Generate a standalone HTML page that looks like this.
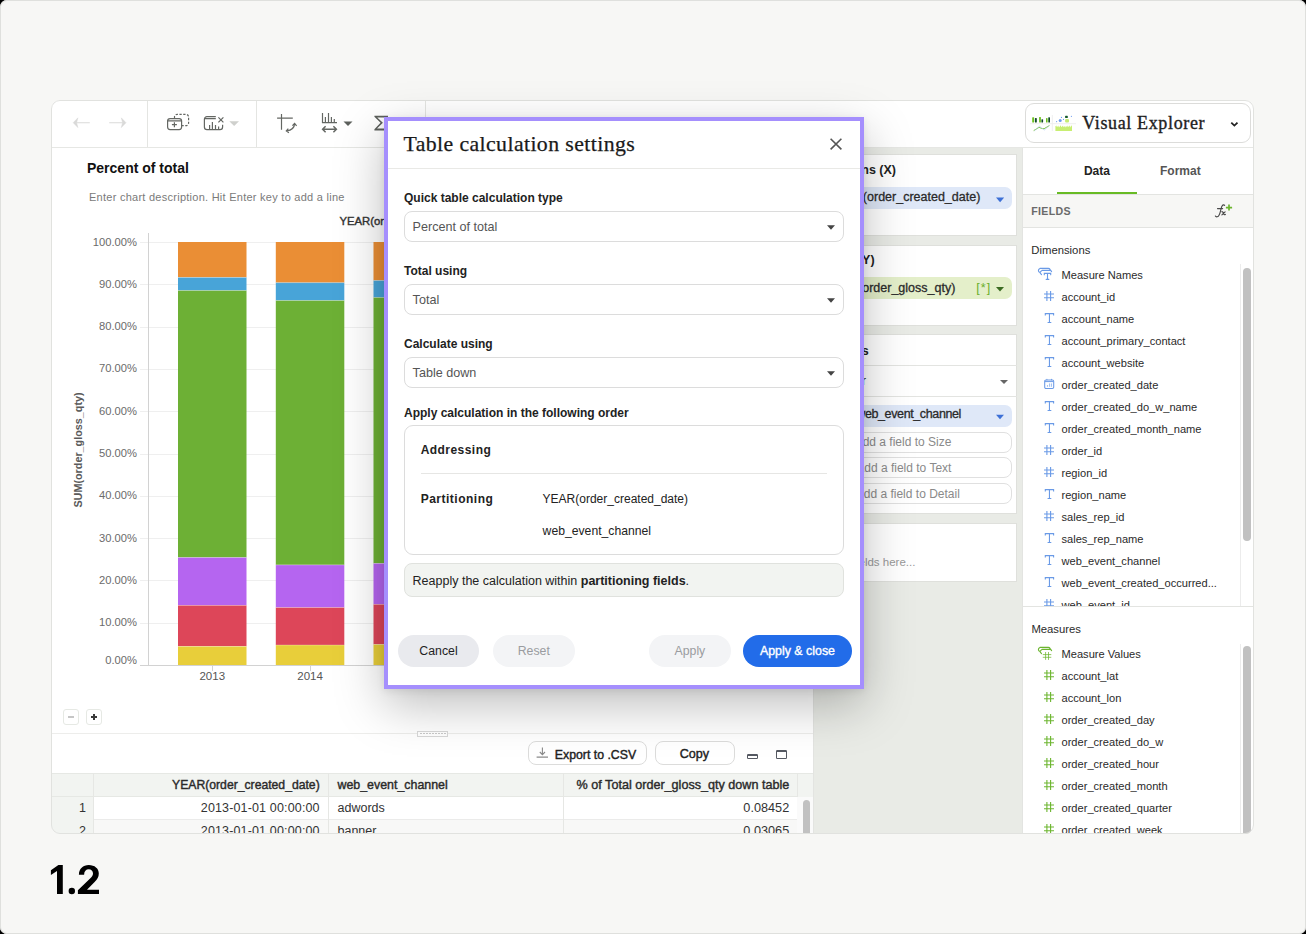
<!DOCTYPE html>
<html><head><meta charset="utf-8">
<style>
*{box-sizing:border-box;margin:0;padding:0}
html,body{width:1306px;height:934px;overflow:hidden;background:#000}
body{font-family:"Liberation Sans",sans-serif;color:#222;position:relative}
.a{position:absolute}
.t{position:absolute;white-space:nowrap;line-height:1}
.frame{position:absolute;left:0;top:0;width:1306px;height:934px;border-radius:7px;background:#f7f7f5;box-shadow:inset 0 0 0 1px #dfe0dd;overflow:hidden}
.card{position:absolute;left:51px;top:100px;width:1203px;height:734px;background:#fff;border-radius:9px;overflow:hidden}
.vl{position:absolute;width:1px;background:#e4e5e2}
.hl{position:absolute;height:1px;background:#e4e5e2}
</style></head>
<body>
<div class="frame">
  <div class="card"><div class="a" style="left:-51px;top:-100px;width:1306px;height:934px">
    <!-- toolbar -->
    <div class="hl" style="left:51px;top:147px;width:1203px;background:#e6e7e4"></div>
    <div class="vl" style="left:147px;top:100px;height:47px"></div>
    <div class="vl" style="left:256px;top:100px;height:47px"></div>
    <div class="vl" style="left:425px;top:100px;height:47px"></div>
    <svg class="a" style="left:0;top:0" width="460" height="150" viewBox="0 0 460 150">
      <g fill="#d9d9d8" stroke="#d9d9d8" stroke-width="0.5" stroke-linejoin="round">
        <path d="M77.9 117.8L73.2 122.7L77.9 127.6L76.6 122.7Z"/>
        <path d="M121.3 117.8L126 122.7L121.3 127.6L122.6 122.7Z"/>
      </g>
      <path d="M75 122.7H89.8M109.2 122.7H124" stroke="#dadad9" stroke-width="1.1"/>
      <g fill="none" stroke="#646763" stroke-width="1.2">
        <rect x="167.6" y="118.6" width="14" height="11" rx="2.5"/>
        <path d="M168 120.9H181.2"/>
        <path d="M174.4 122.2V127.2M171.9 124.7H176.9"/>
        <path d="M174.5 118.3V117a2.6 2.6 0 0 1 2.6-2.6H186a2.6 2.6 0 0 1 2.6 2.6V123a2.6 2.6 0 0 1-2.6 2.6H182" stroke-dasharray="2.3 1.5"/>
        <path d="M215.8 116.6H207a2.6 2.6 0 0 0-2.6 2.6V127a2.6 2.6 0 0 0 2.6 2.6H220a2.6 2.6 0 0 0 2.6-2.6V124.8"/>
        <path d="M204.6 118.7H215.8"/>
        <path d="M209.6 125V129.5M212.4 122V129.5M215.5 125V129.5M218.6 126.5V129.5"/>
        <path d="M218.4 117.4L223.4 122.4M223.4 117.4L218.4 122.4"/>
        <path d="M281.5 114V129.7M277.1 118.1H292.8"/>
        <path d="M286.6 130.9Q294.3 129.9 294.6 123.6M288.3 128.6L286.3 130.9L288.9 132.7M292.4 125.6L294.6 123.3L296.6 125.9"/>
        <path d="M322.5 113.1V122.6H337M325.4 117.1V122.6M328.5 113.1V122.6M331.4 117.1V122.6M334.3 119V122.6"/>
        <path d="M323 129.2H336M325.6 126.2L322.6 129.2L325.6 132.2M333.4 126.2L336.4 129.2L333.4 132.2" stroke-width="1.5"/>
      </g>
      <path d="M229.3 121.3H239L234.15 125.9Z" fill="#cfd0cd"/>
      <path d="M343.5 121.6H352.5L348 125.9Z" fill="#5d605c"/>
      <path d="M374.4 115.8H388V117.4H377.2L382.9 122.8L377 128.4H388V130.4H374.4V129.3L380.6 122.8L374.4 116.8Z" fill="#5d605c"/>
    </svg>

    <!-- chart title -->
    <div class="t" style="left:87px;top:161.4px;font-size:14px;font-weight:bold;color:#111">Percent of total</div>
    <div class="t" style="left:89px;top:192.2px;font-size:11px;letter-spacing:0.26px;color:#7a7a7a">Enter chart description. Hit Enter key to add a line</div>
    <div class="t" style="left:339.5px;top:215.6px;font-size:11.3px;color:#333;-webkit-text-stroke:0.4px #333">YEAR(order_created_date)</div>

    <!-- y-axis -->
    <div class="a" style="left:77.6px;top:450px;width:0;height:0">
      <div class="t" style="left:0;top:0;transform:translate(-50%,-50%) rotate(-90deg);font-size:10.8px;font-weight:bold;color:#5a5a5a">SUM(order_gloss_qty)</div>
    </div>
    <div class="a" style="left:140px;top:242px;width:260.00px;height:1.00px;background:#efefef;"></div>
<div class="t" style="top:236.52px;font-size:11.2px;color:#6b6b6b;right:1169.00px;">100.00%</div>
<div class="a" style="left:140px;top:284px;width:260.00px;height:1.00px;background:#efefef;"></div>
<div class="t" style="top:278.82px;font-size:11.2px;color:#6b6b6b;right:1169.00px;">90.00%</div>
<div class="a" style="left:140px;top:327px;width:260.00px;height:1.00px;background:#efefef;"></div>
<div class="t" style="top:321.12px;font-size:11.2px;color:#6b6b6b;right:1169.00px;">80.00%</div>
<div class="a" style="left:140px;top:369px;width:260.00px;height:1.00px;background:#efefef;"></div>
<div class="t" style="top:363.42px;font-size:11.2px;color:#6b6b6b;right:1169.00px;">70.00%</div>
<div class="a" style="left:140px;top:411px;width:260.00px;height:1.00px;background:#efefef;"></div>
<div class="t" style="top:405.72px;font-size:11.2px;color:#6b6b6b;right:1169.00px;">60.00%</div>
<div class="a" style="left:140px;top:454px;width:260.00px;height:1.00px;background:#efefef;"></div>
<div class="t" style="top:448.02px;font-size:11.2px;color:#6b6b6b;right:1169.00px;">50.00%</div>
<div class="a" style="left:140px;top:496px;width:260.00px;height:1.00px;background:#efefef;"></div>
<div class="t" style="top:490.32px;font-size:11.2px;color:#6b6b6b;right:1169.00px;">40.00%</div>
<div class="a" style="left:140px;top:538px;width:260.00px;height:1.00px;background:#efefef;"></div>
<div class="t" style="top:532.62px;font-size:11.2px;color:#6b6b6b;right:1169.00px;">30.00%</div>
<div class="a" style="left:140px;top:580px;width:260.00px;height:1.00px;background:#efefef;"></div>
<div class="t" style="top:574.92px;font-size:11.2px;color:#6b6b6b;right:1169.00px;">20.00%</div>
<div class="a" style="left:140px;top:623px;width:260.00px;height:1.00px;background:#efefef;"></div>
<div class="t" style="top:617.22px;font-size:11.2px;color:#6b6b6b;right:1169.00px;">10.00%</div>
<div class="t" style="top:654.82px;font-size:11.2px;color:#6b6b6b;right:1169.00px;">0.00%</div>
<div class="a" style="left:140px;top:665px;width:260.00px;height:1.00px;background:#d2d2d2;"></div>
<div class="a" style="left:148px;top:233px;width:1.00px;height:433.00px;background:#d2d2d2;"></div>
<svg class="a" style="left:0;top:0" width="460" height="700"><rect x="178.0" y="242" width="68.5" height="35.40" fill="#ea8e35"/><rect x="178.0" y="277.4" width="68.5" height="13.10" fill="#48a4d8"/><rect x="178.0" y="290.5" width="68.5" height="267.00" fill="#6db035"/><rect x="178.0" y="557.5" width="68.5" height="47.80" fill="#b565f0"/><rect x="178.0" y="605.3" width="68.5" height="41.00" fill="#dd4659"/><rect x="178.0" y="646.3" width="68.5" height="18.70" fill="#e8ce3a"/><rect x="178.0" y="277.10" width="68.5" height="0.7" fill="rgba(255,255,255,.38)"/><rect x="178.0" y="290.20" width="68.5" height="0.7" fill="rgba(255,255,255,.38)"/><rect x="178.0" y="557.20" width="68.5" height="0.7" fill="rgba(255,255,255,.38)"/><rect x="178.0" y="605.00" width="68.5" height="0.7" fill="rgba(255,255,255,.38)"/><rect x="178.0" y="646.00" width="68.5" height="0.7" fill="rgba(255,255,255,.38)"/><rect x="275.8" y="242" width="68.5" height="40.70" fill="#ea8e35"/><rect x="275.8" y="282.7" width="68.5" height="17.80" fill="#48a4d8"/><rect x="275.8" y="300.5" width="68.5" height="264.40" fill="#6db035"/><rect x="275.8" y="564.9" width="68.5" height="42.60" fill="#b565f0"/><rect x="275.8" y="607.5" width="68.5" height="37.50" fill="#dd4659"/><rect x="275.8" y="645.0" width="68.5" height="20.00" fill="#e8ce3a"/><rect x="275.8" y="282.40" width="68.5" height="0.7" fill="rgba(255,255,255,.38)"/><rect x="275.8" y="300.20" width="68.5" height="0.7" fill="rgba(255,255,255,.38)"/><rect x="275.8" y="564.60" width="68.5" height="0.7" fill="rgba(255,255,255,.38)"/><rect x="275.8" y="607.20" width="68.5" height="0.7" fill="rgba(255,255,255,.38)"/><rect x="275.8" y="644.70" width="68.5" height="0.7" fill="rgba(255,255,255,.38)"/><rect x="373.5" y="242" width="68.5" height="38.50" fill="#ea8e35"/><rect x="373.5" y="280.5" width="68.5" height="17.00" fill="#48a4d8"/><rect x="373.5" y="297.5" width="68.5" height="265.90" fill="#6db035"/><rect x="373.5" y="563.4" width="68.5" height="40.90" fill="#b565f0"/><rect x="373.5" y="604.3" width="68.5" height="40.10" fill="#dd4659"/><rect x="373.5" y="644.4" width="68.5" height="20.60" fill="#e8ce3a"/><rect x="373.5" y="280.20" width="68.5" height="0.7" fill="rgba(255,255,255,.38)"/><rect x="373.5" y="297.20" width="68.5" height="0.7" fill="rgba(255,255,255,.38)"/><rect x="373.5" y="563.10" width="68.5" height="0.7" fill="rgba(255,255,255,.38)"/><rect x="373.5" y="604.00" width="68.5" height="0.7" fill="rgba(255,255,255,.38)"/><rect x="373.5" y="644.10" width="68.5" height="0.7" fill="rgba(255,255,255,.38)"/></svg>
<div class="a" style="left:211.75px;top:665px;width:1.00px;height:6.00px;background:#d2d2d2;"></div>
<div class="t" style="top:671.27px;font-size:11.5px;color:#555;left:212.25px;transform:translateX(-50%);">2013</div>
<div class="a" style="left:309.55px;top:665px;width:1.00px;height:6.00px;background:#d2d2d2;"></div>
<div class="t" style="top:671.27px;font-size:11.5px;color:#555;left:310.05px;transform:translateX(-50%);">2014</div>
<div class="a" style="left:407.25px;top:665px;width:1.00px;height:6.00px;background:#d2d2d2;"></div>
<div class="t" style="top:671.27px;font-size:11.5px;color:#555;left:407.75px;transform:translateX(-50%);">2015</div>

<div class="a" style="left:63.3px;top:709.3px;width:15.4px;height:15.4px;border:1px solid #e6e9e4;border-radius:3px"></div>
<div class="a" style="left:68.1px;top:716.2px;width:5.80px;height:1.60px;background:#c6c6c6;"></div>
<div class="a" style="left:86.2px;top:709.3px;width:15.4px;height:15.4px;border:1px solid #e6e9e4;border-radius:3px"></div>
<div class="a" style="left:91px;top:716.1px;width:6.00px;height:1.80px;background:#3a3a3a;"></div>
<div class="a" style="left:93.1px;top:713.9px;width:1.80px;height:6.00px;background:#3a3a3a;"></div>
<div class="a" style="left:51px;top:733px;width:762.00px;height:1.00px;background:#ededeb;"></div>
<div class="a" style="left:417px;top:730.5px;width:31px;height:6px;border:1px solid #d8d8d8;background:#fff"></div>
<div class="a" style="left:419.5px;top:733px;width:26px;height:1px;background:repeating-linear-gradient(90deg,#c9c9c9 0 2px,transparent 2px 3px)"></div>
<div class="a" style="left:528px;top:741px;width:119px;height:24px;border:1px solid #dcdcdb;border-radius:8px;background:#fff"></div>
<svg class="a" style="left:530px;top:742px" width="24" height="20"><path d="M12.4 5.5V12.5M9.8 10L12.4 12.6L15 10M6.6 15.1H18" fill="none" stroke="#8a8a8a" stroke-width="1.1"/></svg>
<div class="t" style="top:748.59px;font-size:12.3px;color:#222;left:554.80px;-webkit-text-stroke:0.4px #222;">Export to .CSV</div>
<div class="a" style="left:655px;top:741px;width:80px;height:24px;border:1px solid #dcdcdb;border-radius:8px;background:#fff"></div>
<div class="t" style="top:748.33px;font-size:12.6px;color:#222;left:679.70px;-webkit-text-stroke:0.4px #222;">Copy</div>
<div class="a" style="left:747px;top:753.5px;width:11px;height:5.5px;border:1.3px solid #555962;border-top-width:2px;border-radius:1.2px"></div>
<div class="a" style="left:776px;top:749.8px;width:11px;height:9.5px;border:1.3px solid #555962;border-top-width:2.6px;border-radius:1.2px"></div>
<div class="a" style="left:51px;top:773px;width:762.00px;height:23.50px;background:#f2f4f1;"></div>
<div class="a" style="left:51px;top:772.5px;width:762.00px;height:1.00px;background:#e6e8e4;"></div>
<div class="a" style="left:51px;top:796px;width:746.00px;height:1.00px;background:#e6e8e4;"></div>
<div class="a" style="left:51px;top:796.5px;width:42.50px;height:37.50px;background:#f2f4f1;"></div>
<div class="a" style="left:93.5px;top:819px;width:703.50px;height:1.00px;background:#ebebea;"></div>
<div class="a" style="left:93.5px;top:820px;width:703.50px;height:14.00px;background:#f8f8f7;"></div>
<div class="a" style="left:93px;top:773px;width:1.00px;height:61.00px;background:#e6e7e4;"></div>
<div class="a" style="left:328px;top:773px;width:1.00px;height:61.00px;background:#e6e7e4;"></div>
<div class="a" style="left:563px;top:773px;width:1.00px;height:61.00px;background:#e6e7e4;"></div>
<div class="a" style="left:797px;top:773px;width:1.00px;height:61.00px;background:#e6e7e4;"></div>
<div class="t" style="top:779.37px;font-size:12.2px;color:#2a2a2a;right:986.30px;-webkit-text-stroke:0.4px #2a2a2a;">YEAR(order_created_date)</div>
<div class="t" style="top:779.20px;font-size:12.4px;color:#2a2a2a;left:337.50px;-webkit-text-stroke:0.4px #2a2a2a;">web_event_channel</div>
<div class="t" style="top:779.03px;font-size:12.6px;color:#2a2a2a;right:516.80px;-webkit-text-stroke:0.4px #2a2a2a;">% of Total order_gloss_qty down table</div>
<div class="t" style="top:802.12px;font-size:12.5px;color:#333;right:1220.00px;">1</div>
<div class="t" style="top:802.12px;font-size:12.5px;color:#333;letter-spacing:0.15px;right:986.30px;">2013-01-01 00:00:00</div>
<div class="t" style="top:802.12px;font-size:12.5px;color:#333;left:337.50px;">adwords</div>
<div class="t" style="top:801.95px;font-size:12.7px;color:#333;right:516.80px;">0.08452</div>
<div class="t" style="top:825.12px;font-size:12.5px;color:#333;right:1220.00px;">2</div>
<div class="t" style="top:825.12px;font-size:12.5px;color:#333;letter-spacing:0.15px;right:986.30px;">2013-01-01 00:00:00</div>
<div class="t" style="top:825.12px;font-size:12.5px;color:#333;left:337.50px;">banner</div>
<div class="t" style="top:824.95px;font-size:12.7px;color:#333;right:516.80px;">0.03065</div>
<div class="a" style="left:797px;top:796.5px;width:16.00px;height:37.50px;background:#fafafa;"></div>
<div class="a" style="left:802.5px;top:800px;width:7.5px;height:40px;border-radius:4px;background:#c1c1c1"></div>
<div class="a" style="left:812.5px;top:147px;width:1.00px;height:687.00px;background:#e3e4e1;"></div>
<div class="a" style="left:813.5px;top:147.5px;width:208.50px;height:686.50px;background:#e9ebe6;"></div>
<div class="a" style="left:800px;top:154px;width:217px;height:82px;background:#fff;border:1px solid #dfe0dc"></div>
<div class="a" style="left:800px;top:244.5px;width:217px;height:81.5px;background:#fff;border:1px solid #dfe0dc"></div>
<div class="a" style="left:800px;top:334px;width:217px;height:180px;background:#fff;border:1px solid #dfe0dc"></div>
<div class="a" style="left:800px;top:522.5px;width:217px;height:59.5px;background:#fff;border:1px solid #dfe0dc"></div>
<div class="t" style="top:163.72px;font-size:12.5px;color:#222;font-weight:bold;right:410.00px;">Columns (X)</div>
<div class="a" style="left:805px;top:187px;width:207px;height:22px;background:#dfe8f8;border-radius:7px"></div>
<div class="t" style="top:191.42px;font-size:12.5px;color:#2a2a2a;right:325.70px;-webkit-text-stroke:0.3px #2a2a2a;">YEAR(order_created_date)</div>
<svg class="a" style="left:990px;top:192.8px" width="20" height="14"><path d="M6 4.6H14.2L10.1 9.3Z" fill="#3d70d6"/></svg>
<div class="t" style="top:253.72px;font-size:12.5px;color:#222;font-weight:bold;right:431.40px;">Rows (Y)</div>
<div class="a" style="left:805px;top:277px;width:207px;height:22px;background:#e4efca;border-radius:7px"></div>
<div class="t" style="top:281.92px;font-size:12.5px;color:#2a2a2a;right:350.70px;-webkit-text-stroke:0.3px #2a2a2a;">SUM(order_gloss_qty)</div>
<div class="t" style="top:281.92px;font-size:12.5px;color:#6aae2c;letter-spacing:1.1px;left:976.30px;">[*]</div>
<svg class="a" style="left:990px;top:282px" width="20" height="14"><path d="M6 5H14L10 9.4Z" fill="#3b6b22"/></svg>
<div class="a" style="left:800px;top:365px;width:217.00px;height:1.00px;background:#e3e4e1;"></div>
<div class="t" style="top:344.62px;font-size:12.5px;color:#222;font-weight:bold;right:437.40px;">Marks</div>
<div class="t" style="top:374.84px;font-size:12px;color:#333;right:440.00px;">Bar</div>
<svg class="a" style="left:995px;top:374px" width="20" height="14"><path d="M5 6H13L9 9.9Z" fill="#666"/></svg>
<div class="a" style="left:800px;top:396px;width:217.00px;height:1.00px;background:#e3e4e1;"></div>
<div class="a" style="left:805px;top:405px;width:207px;height:22px;background:#dfe8f8;border-radius:7px"></div>
<div class="t" style="top:408.42px;font-size:12.5px;color:#2a2a2a;letter-spacing:-0.38px;right:345.00px;-webkit-text-stroke:0.3px #2a2a2a;">web_event_channel</div>
<svg class="a" style="left:990px;top:410px" width="20" height="14"><path d="M6 4.8H14L10 9.3Z" fill="#3d70d6"/></svg>
<div class="a" style="left:805px;top:431.5px;width:207px;height:21px;border:1px solid #e0e0e0;border-radius:8px;background:#fff"></div>
<div class="t" style="top:435.94px;font-size:12px;color:#8a8a8a;right:354.60px;">Add a field to Size</div>
<div class="a" style="left:805px;top:457.3px;width:207px;height:21px;border:1px solid #e0e0e0;border-radius:8px;background:#fff"></div>
<div class="t" style="top:461.74px;font-size:12px;color:#8a8a8a;right:354.60px;">Add a field to Text</div>
<div class="a" style="left:805px;top:483.4px;width:207px;height:21px;border:1px solid #e0e0e0;border-radius:8px;background:#fff"></div>
<div class="t" style="top:487.84px;font-size:12px;color:#8a8a8a;right:346.20px;">Add a field to Detail</div>
<div class="t" style="top:556.57px;font-size:11.5px;color:#999;right:390.60px;">Drop fields here...</div>
<div class="a" style="left:1022px;top:147.5px;width:232.00px;height:686.50px;background:#fff;"></div>
<div class="a" style="left:1022px;top:147.5px;width:1.00px;height:686.50px;background:#e3e4e1;"></div>
<div class="t" style="top:164.84px;font-size:12px;color:#222;font-weight:bold;left:1083.90px;">Data</div>
<div class="t" style="top:164.84px;font-size:12px;color:#555;font-weight:bold;left:1160.00px;">Format</div>
<div class="a" style="left:1023px;top:194px;width:231.00px;height:33.50px;background:#f7f7f5;"></div>
<div class="a" style="left:1023px;top:194px;width:231.00px;height:1.00px;background:#e3e4e1;"></div>
<div class="a" style="left:1023px;top:227px;width:231.00px;height:1.00px;background:#e3e4e1;"></div>
<div class="a" style="left:1056.8px;top:191.8px;width:80.40px;height:2.40px;background:#68bb25;"></div>
<div class="t" style="top:205.83px;font-size:10.6px;color:#6a6a6a;font-weight:bold;letter-spacing:0.3px;left:1031.30px;">FIELDS</div>
<svg class="a" style="left:1208px;top:198px" width="30" height="24"><g fill="none" stroke="#4a4a4a" stroke-width="1.15" stroke-linecap="round"><path d="M16.6 7.3Q15.4 6.3 14.2 7.8Q13.4 9 12.3 13.8Q11.2 18.4 9.1 18.8Q7.8 19 7.4 18.1"/><path d="M9.5 10.6H14.6"/><path d="M13.9 13.6Q14.9 13.5 15.4 15.3Q15.9 17.1 17.4 16.4M17.1 13.9L13.9 16.9"/></g><path d="M21 6.5V12.6M17.9 9.55H24.1" stroke="#6cb52f" stroke-width="1.7"/></svg>
<div class="t" style="top:244.53px;font-size:11.3px;color:#2a2a2a;left:1031.30px;">Dimensions</div>
<div class="a" style="left:1023px;top:264px;width:231px;height:342.5px;overflow:hidden"><div class="a" style="left:-1023px;top:-264px;width:1306px;height:934px"><svg class="a" style="left:1034px;top:264.0px" width="20" height="18"><g fill="none" stroke="#6a9ae6" stroke-width="1.1" stroke-linecap="round"><path d="M6 4.4H14.4Q15.4 4.4 16.2 5.6L17.6 7.6M8 6.4H15.8M6 4.4Q4.3 5 4.4 6.8Q4.7 8.1 6 8.6L7.5 10.6M8 6.4Q6.7 6.9 6 8.6"/><path d="M10.3 10.7V9.4H16.7V10.7M13.5 9.4V15.4M12.2 15.4H14.8"/></g></svg>
<div class="t" style="top:269.50px;font-size:11.1px;color:#2a2a2a;left:1061.50px;">Measure Names</div>
<svg class="a" style="left:1043px;top:290.4px" width="12" height="12"><path d="M3.9 1V11M7.6 1V11M1 4H11M1 7.8H11" stroke="#6a9ae6" stroke-width="1.1" fill="none"/></svg>
<div class="t" style="top:291.50px;font-size:11.1px;color:#2a2a2a;left:1061.50px;">account_id</div>
<svg class="a" style="left:1043px;top:312.4px" width="12" height="12"><path d="M2.3 3.6V1.6H10.6V3.6M6.45 1.6V10.5M4.6 10.5H8.3" stroke="#6a9ae6" stroke-width="1.1" fill="none"/></svg>
<div class="t" style="top:313.50px;font-size:11.1px;color:#2a2a2a;left:1061.50px;">account_name</div>
<svg class="a" style="left:1043px;top:334.4px" width="12" height="12"><path d="M2.3 3.6V1.6H10.6V3.6M6.45 1.6V10.5M4.6 10.5H8.3" stroke="#6a9ae6" stroke-width="1.1" fill="none"/></svg>
<div class="t" style="top:335.50px;font-size:11.1px;color:#2a2a2a;left:1061.50px;">account_primary_contact</div>
<svg class="a" style="left:1043px;top:356.4px" width="12" height="12"><path d="M2.3 3.6V1.6H10.6V3.6M6.45 1.6V10.5M4.6 10.5H8.3" stroke="#6a9ae6" stroke-width="1.1" fill="none"/></svg>
<div class="t" style="top:357.50px;font-size:11.1px;color:#2a2a2a;left:1061.50px;">account_website</div>
<svg class="a" style="left:1043px;top:378.4px" width="12" height="12"><rect x="1.7" y="1.9" width="9" height="8.6" rx="1.3" stroke="#6a9ae6" stroke-width="1.05" fill="none"/><path d="M1.9 3.6H10.5" stroke="#6a9ae6" stroke-width="1"/><path d="M3.9 .9V2.3M8.5 .9V2.3" stroke="#6a9ae6" stroke-width=".9"/><g fill="#6a9ae6"><circle cx="6.6" cy="6.1" r=".62"/><circle cx="8.5" cy="6.1" r=".62"/><circle cx="4.5" cy="7.9" r=".62"/><circle cx="6.6" cy="7.9" r=".62"/><circle cx="8.5" cy="7.9" r=".62"/></g></svg>
<div class="t" style="top:379.50px;font-size:11.1px;color:#2a2a2a;left:1061.50px;">order_created_date</div>
<svg class="a" style="left:1043px;top:400.4px" width="12" height="12"><path d="M2.3 3.6V1.6H10.6V3.6M6.45 1.6V10.5M4.6 10.5H8.3" stroke="#6a9ae6" stroke-width="1.1" fill="none"/></svg>
<div class="t" style="top:401.50px;font-size:11.1px;color:#2a2a2a;left:1061.50px;">order_created_do_w_name</div>
<svg class="a" style="left:1043px;top:422.4px" width="12" height="12"><path d="M2.3 3.6V1.6H10.6V3.6M6.45 1.6V10.5M4.6 10.5H8.3" stroke="#6a9ae6" stroke-width="1.1" fill="none"/></svg>
<div class="t" style="top:423.50px;font-size:11.1px;color:#2a2a2a;left:1061.50px;">order_created_month_name</div>
<svg class="a" style="left:1043px;top:444.4px" width="12" height="12"><path d="M3.9 1V11M7.6 1V11M1 4H11M1 7.8H11" stroke="#6a9ae6" stroke-width="1.1" fill="none"/></svg>
<div class="t" style="top:445.50px;font-size:11.1px;color:#2a2a2a;left:1061.50px;">order_id</div>
<svg class="a" style="left:1043px;top:466.4px" width="12" height="12"><path d="M3.9 1V11M7.6 1V11M1 4H11M1 7.8H11" stroke="#6a9ae6" stroke-width="1.1" fill="none"/></svg>
<div class="t" style="top:467.50px;font-size:11.1px;color:#2a2a2a;left:1061.50px;">region_id</div>
<svg class="a" style="left:1043px;top:488.4px" width="12" height="12"><path d="M2.3 3.6V1.6H10.6V3.6M6.45 1.6V10.5M4.6 10.5H8.3" stroke="#6a9ae6" stroke-width="1.1" fill="none"/></svg>
<div class="t" style="top:489.50px;font-size:11.1px;color:#2a2a2a;left:1061.50px;">region_name</div>
<svg class="a" style="left:1043px;top:510.4px" width="12" height="12"><path d="M3.9 1V11M7.6 1V11M1 4H11M1 7.8H11" stroke="#6a9ae6" stroke-width="1.1" fill="none"/></svg>
<div class="t" style="top:511.50px;font-size:11.1px;color:#2a2a2a;left:1061.50px;">sales_rep_id</div>
<svg class="a" style="left:1043px;top:532.4px" width="12" height="12"><path d="M2.3 3.6V1.6H10.6V3.6M6.45 1.6V10.5M4.6 10.5H8.3" stroke="#6a9ae6" stroke-width="1.1" fill="none"/></svg>
<div class="t" style="top:533.50px;font-size:11.1px;color:#2a2a2a;left:1061.50px;">sales_rep_name</div>
<svg class="a" style="left:1043px;top:554.4px" width="12" height="12"><path d="M2.3 3.6V1.6H10.6V3.6M6.45 1.6V10.5M4.6 10.5H8.3" stroke="#6a9ae6" stroke-width="1.1" fill="none"/></svg>
<div class="t" style="top:555.50px;font-size:11.1px;color:#2a2a2a;left:1061.50px;">web_event_channel</div>
<svg class="a" style="left:1043px;top:576.4px" width="12" height="12"><path d="M2.3 3.6V1.6H10.6V3.6M6.45 1.6V10.5M4.6 10.5H8.3" stroke="#6a9ae6" stroke-width="1.1" fill="none"/></svg>
<div class="t" style="top:577.50px;font-size:11.1px;color:#2a2a2a;left:1061.50px;">web_event_created_occurred...</div>
<svg class="a" style="left:1043px;top:598.4px" width="12" height="12"><path d="M3.9 1V11M7.6 1V11M1 4H11M1 7.8H11" stroke="#6a9ae6" stroke-width="1.1" fill="none"/></svg>
<div class="t" style="top:599.50px;font-size:11.1px;color:#2a2a2a;left:1061.50px;">web_event_id</div>
</div></div>
<div class="a" style="left:1239.5px;top:264px;width:1.00px;height:342.50px;background:#ececec;"></div>
<div class="a" style="left:1243px;top:267.5px;width:8px;height:273.5px;border-radius:4px;background:#c1c1c1"></div>
<div class="a" style="left:1023px;top:606px;width:231.00px;height:1.00px;background:#e3e4e1;"></div>
<div class="t" style="top:623.53px;font-size:11.3px;color:#2a2a2a;left:1031.40px;">Measures</div>
<div class="a" style="left:1023px;top:643.5px;width:231px;height:190px;overflow:hidden"><div class="a" style="left:-1023px;top:-643.5px;width:1306px;height:934px"><svg class="a" style="left:1034px;top:643.0px" width="20" height="18"><g fill="none" stroke="#6cb52f" stroke-width="1.1" stroke-linecap="round"><path d="M6 4.4H14.4Q15.4 4.4 16.2 5.6L17.6 7.6M8 6.4H15.8M6 4.4Q4.3 5 4.4 6.8Q4.7 8.1 6 8.6L7.5 10.6M8 6.4Q6.7 6.9 6 8.6"/><path d="M11.6 9.4V16.5M14.5 9.4V16.5M9.2 11.6H16.9M9.2 14.3H16.9" stroke-width="1" opacity=".75"/></g></svg>
<div class="t" style="top:648.50px;font-size:11.1px;color:#2a2a2a;left:1061.50px;">Measure Values</div>
<svg class="a" style="left:1043px;top:669.4px" width="12" height="12"><path d="M3.9 1V11M7.6 1V11M1 4H11M1 7.8H11" stroke="#6cb52f" stroke-width="1.1" fill="none"/></svg>
<div class="t" style="top:670.50px;font-size:11.1px;color:#2a2a2a;left:1061.50px;">account_lat</div>
<svg class="a" style="left:1043px;top:691.4px" width="12" height="12"><path d="M3.9 1V11M7.6 1V11M1 4H11M1 7.8H11" stroke="#6cb52f" stroke-width="1.1" fill="none"/></svg>
<div class="t" style="top:692.50px;font-size:11.1px;color:#2a2a2a;left:1061.50px;">account_lon</div>
<svg class="a" style="left:1043px;top:713.4px" width="12" height="12"><path d="M3.9 1V11M7.6 1V11M1 4H11M1 7.8H11" stroke="#6cb52f" stroke-width="1.1" fill="none"/></svg>
<div class="t" style="top:714.50px;font-size:11.1px;color:#2a2a2a;left:1061.50px;">order_created_day</div>
<svg class="a" style="left:1043px;top:735.4px" width="12" height="12"><path d="M3.9 1V11M7.6 1V11M1 4H11M1 7.8H11" stroke="#6cb52f" stroke-width="1.1" fill="none"/></svg>
<div class="t" style="top:736.50px;font-size:11.1px;color:#2a2a2a;left:1061.50px;">order_created_do_w</div>
<svg class="a" style="left:1043px;top:757.4px" width="12" height="12"><path d="M3.9 1V11M7.6 1V11M1 4H11M1 7.8H11" stroke="#6cb52f" stroke-width="1.1" fill="none"/></svg>
<div class="t" style="top:758.50px;font-size:11.1px;color:#2a2a2a;left:1061.50px;">order_created_hour</div>
<svg class="a" style="left:1043px;top:779.4px" width="12" height="12"><path d="M3.9 1V11M7.6 1V11M1 4H11M1 7.8H11" stroke="#6cb52f" stroke-width="1.1" fill="none"/></svg>
<div class="t" style="top:780.50px;font-size:11.1px;color:#2a2a2a;left:1061.50px;">order_created_month</div>
<svg class="a" style="left:1043px;top:801.4px" width="12" height="12"><path d="M3.9 1V11M7.6 1V11M1 4H11M1 7.8H11" stroke="#6cb52f" stroke-width="1.1" fill="none"/></svg>
<div class="t" style="top:802.50px;font-size:11.1px;color:#2a2a2a;left:1061.50px;">order_created_quarter</div>
<svg class="a" style="left:1043px;top:823.4px" width="12" height="12"><path d="M3.9 1V11M7.6 1V11M1 4H11M1 7.8H11" stroke="#6cb52f" stroke-width="1.1" fill="none"/></svg>
<div class="t" style="top:824.50px;font-size:11.1px;color:#2a2a2a;left:1061.50px;">order_created_week</div>
</div></div>
<div class="a" style="left:1239.5px;top:643.5px;width:1.00px;height:190.50px;background:#ececec;"></div>
<div class="a" style="left:1243px;top:646px;width:8px;height:190px;border-radius:4px;background:#c1c1c1"></div>
<div class="a" style="left:1025px;top:103px;width:226px;height:40px;border:1px solid #dcdcda;border-radius:9px;background:#fff"></div>
<div class="t" style="top:114.12px;font-size:18px;color:#222;letter-spacing:0.64px;font-family:'Liberation Serif',serif;left:1082.20px;-webkit-text-stroke:0.35px #222;">Visual Explorer</div>
<svg class="a" style="left:1226px;top:117px" width="14" height="14"><path d="M5.3 5.6L8.4 8.6L11.5 5.6" stroke="#222" stroke-width="1.8" fill="none"/></svg>
<svg class="a" style="left:1028px;top:108px" width="50" height="30">
<path d="M2 15.7H48M24.3 7V23" stroke="#ededed" stroke-width=".9"/>
<g fill="#6cc01f"><rect x="4.2" y="9.2" width="1.9" height="5.3" rx=".6"/><rect x="11.1" y="9" width="1.8" height="5.5" rx=".6"/><rect x="18" y="10.1" width="1.6" height="4.4" rx=".6"/></g>
<g fill="#12482b"><rect x="6.9" y="10.1" width="1.9" height="4.4" rx=".6"/><rect x="13.4" y="11.2" width="1.7" height="3.3" rx=".6"/><rect x="20.3" y="9.2" width="1.7" height="5.3" rx=".6"/></g>
<path d="M5.7 22.6L11.1 19.3L13.8 20.5L16.1 20.7L21.4 17.6" stroke="#79c63a" stroke-width="1" fill="none" stroke-linejoin="round"/>
<path d="M6.5 22.8L11.4 18.2L13.8 20L16.3 22L21.4 17.4" stroke="#b9cdf6" stroke-width=".7" fill="none"/>
<g fill="#6f9cf0"><circle cx="32.2" cy="12.6" r="1.5"/><circle cx="28.6" cy="13.6" r=".6"/><circle cx="33.5" cy="9.4" r=".6"/><circle cx="35.5" cy="11.4" r=".6"/><circle cx="43.4" cy="8.3" r=".6"/></g>
<rect x="37.1" y="7.8" width="2.7" height="2.2" rx=".6" fill="#185a2e"/>
<rect x="37.1" y="11" width="3.9" height="3.5" rx="1" fill="#c6ec74"/>
<path d="M27.4 23V18.2L28.3 17.4L29 19.2L30.2 17.6L31 19.5L32.6 17.3L33.4 19.3L35 17.6L35.6 19.2L37.1 17.9L37.8 19.4L39.2 17.4L40 19.3L41.4 17.6L42.3 19.5L43.2 17.2L44 18.6V23Z" fill="#c8ee72"/>
</svg>
  </div></div>
  <div class="a" style="left:51px;top:100px;width:1203px;height:734px;border:1px solid #e1e2df;border-radius:9px;pointer-events:none"></div>
  <svg class="a" style="left:40px;top:850px" width="80" height="60"><polygon points="10.9,20.3 18.4,15.1 22.8,15.1 22.8,43.9 17,43.9 17,21 10.9,25" fill="#000"/><circle cx="31.8" cy="41" r="3.2" fill="#000"/><path d="M38.9 24.7C38.9 19 43 15.1 48.8 15.1C54.6 15.1 58.8 18.6 58.8 23.6C58.8 27 57.3 29.4 54.6 32.1L47 39.8H59V43.9H37.9V40.3L50.1 28.6C52 26.7 53 25.4 53 23.6C53 21 51.2 19.3 48.8 19.3C46 19.3 44.2 21.2 44.1 24.7Z" fill="#000"/></svg>
<div class="a" style="left:384px;top:117px;width:480px;height:572px;border:4px solid #a58ffd;background:#fff;box-shadow:0 16px 46px rgba(0,0,0,.26),0 2px 8px rgba(0,0,0,.08)"></div>
<div class="t" style="top:134.34px;font-size:21.8px;color:#1a1a1a;letter-spacing:0.4px;font-family:'Liberation Serif',serif;left:403.50px;-webkit-text-stroke:0.25px #1a1a1a;">Table calculation settings</div>
<svg class="a" style="left:826px;top:134px" width="20" height="20"><path d="M4.6 4.8L15.4 15.4M15.4 4.8L4.6 15.4" stroke="#555" stroke-width="1.6"/></svg>
<div class="a" style="left:388px;top:167.5px;width:472.00px;height:1.00px;background:#e9e9e6;"></div>
<div class="t" style="top:192.14px;font-size:12px;color:#222;font-weight:bold;left:404.00px;">Quick table calculation type</div>
<div class="a" style="left:404px;top:210.5px;width:440px;height:31px;border:1px solid #dcdcdc;border-radius:8px;background:#fff"></div>
<div class="t" style="top:221.03px;font-size:12.6px;color:#555;left:412.60px;">Percent of total</div>
<svg class="a" style="left:822px;top:218.5px" width="18" height="14"><path d="M5 6.2H13L9 10.8Z" fill="#444"/></svg>
<div class="t" style="top:265.24px;font-size:12px;color:#222;font-weight:bold;left:404.00px;">Total using</div>
<div class="a" style="left:404px;top:283.6px;width:440px;height:31px;border:1px solid #dcdcdc;border-radius:8px;background:#fff"></div>
<div class="t" style="top:294.13px;font-size:12.6px;color:#555;left:412.60px;">Total</div>
<svg class="a" style="left:822px;top:291.6px" width="18" height="14"><path d="M5 6.2H13L9 10.8Z" fill="#444"/></svg>
<div class="t" style="top:338.24px;font-size:12px;color:#222;font-weight:bold;left:404.00px;">Calculate using</div>
<div class="a" style="left:404px;top:356.6px;width:440px;height:31px;border:1px solid #dcdcdc;border-radius:8px;background:#fff"></div>
<div class="t" style="top:367.13px;font-size:12.6px;color:#555;left:412.60px;">Table down</div>
<svg class="a" style="left:822px;top:364.6px" width="18" height="14"><path d="M5 6.2H13L9 10.8Z" fill="#444"/></svg>
<div class="t" style="top:407.24px;font-size:12px;color:#222;font-weight:bold;left:404.00px;">Apply calculation in the following order</div>
<div class="a" style="left:404px;top:424.5px;width:440px;height:130px;border:1px solid #dcdcdc;border-radius:9px;background:#fff"></div>
<div class="t" style="top:443.64px;font-size:12px;color:#222;font-weight:bold;letter-spacing:0.45px;left:420.70px;">Addressing</div>
<div class="a" style="left:420.7px;top:473px;width:406.30px;height:1.00px;background:#e6e6e4;"></div>
<div class="t" style="top:492.84px;font-size:12px;color:#222;font-weight:bold;letter-spacing:0.5px;left:420.70px;">Partitioning</div>
<div class="t" style="top:492.84px;font-size:12px;color:#222;left:542.60px;">YEAR(order_created_date)</div>
<div class="t" style="top:524.67px;font-size:12.2px;color:#222;left:542.60px;">web_event_channel</div>
<div class="a" style="left:404px;top:563px;width:440px;height:33.5px;border:1px solid #e0e2de;border-radius:8px;background:#f2f4f1"></div>
<div class="t" style="top:574.82px;font-size:12.5px;color:#222;left:412.60px;">Reapply the calculation within <b>partitioning fields</b>.</div>
<div class="a" style="left:397.6px;top:635px;width:81.79999999999995px;height:31.5px;border-radius:16px;background:#e9eaee"></div>
<div class="t" style="top:644.79px;font-size:12.3px;color:#1f1f1f;left:438.50px;transform:translateX(-50%);">Cancel</div>
<div class="a" style="left:492.6px;top:635px;width:82.39999999999998px;height:31.5px;border-radius:16px;background:#f3f4f6"></div>
<div class="t" style="top:644.79px;font-size:12.3px;color:#9a9ca0;left:533.80px;transform:translateX(-50%);">Reset</div>
<div class="a" style="left:649px;top:635px;width:81.79999999999995px;height:31.5px;border-radius:16px;background:#f3f4f6"></div>
<div class="t" style="top:644.79px;font-size:12.3px;color:#9a9ca0;left:689.90px;transform:translateX(-50%);">Apply</div>
<div class="a" style="left:743.2px;top:635px;width:108.5px;height:31.5px;border-radius:16px;background:#226ce9"></div>
<div class="t" style="top:644.70px;font-size:12.4px;color:#fff;left:797.45px;transform:translateX(-50%);-webkit-text-stroke:0.35px #fff;">Apply &amp; close</div>
</div>
</body></html>
